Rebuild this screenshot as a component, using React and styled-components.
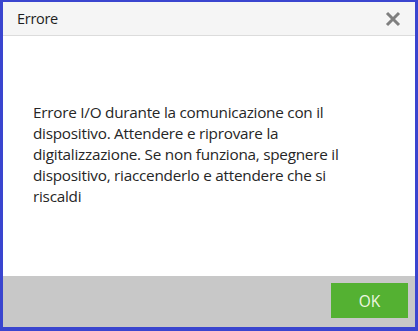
import React from "react";
import styled, { createGlobalStyle } from "styled-components";

const Global = createGlobalStyle`
  html, body { margin: 0; padding: 0; background: #ffffff; }
  body { font-family: "Open Sans", "Noto Sans", Arial, sans-serif; }
  #root { width: 418px; height: 331px; }
`;

const Frame = styled.div`
  box-sizing: border-box;
  width: 418px;
  height: 331px;
  border-style: solid;
  border-color: #3a45cf;
  border-width: 2px 3px 4px 3px;
  display: flex;
  flex-direction: column;
  background: #fff;
`;

const Header = styled.div`
  height: 33px;
  background: #f5f5f5;
  border-bottom: 1px solid #dcdcdc;
  display: flex;
  align-items: center;
  justify-content: space-between;
  padding: 0 14px 0 14px;
  flex-shrink: 0;
`;

const Title = styled.span`
  font-size: 14.5px;
  color: #1e1e1e;
  letter-spacing: -0.3px;
`;

const Close = styled.button`
  border: none;
  background: transparent;
  padding: 0;
  width: 16px;
  height: 16px;
  display: flex;
  cursor: pointer;
`;

const Body = styled.div`
  flex: 1;
  padding: 0 0 4px 30px;
  display: flex;
  align-items: center;
`;

const Message = styled.p`
  margin: 0;
  width: 322px;
  font-size: 15.3px;
  line-height: 21px;
  color: #262626;
  letter-spacing: -0.25px;
`;

const Footer = styled.div`
  height: 49px;
  background: #c8c8c8;
  display: flex;
  align-items: center;
  justify-content: flex-end;
  padding: 0 7px 2px 0;
  flex-shrink: 0;
`;

const OkButton = styled.button`
  width: 77px;
  height: 35px;
  border: none;
  background: #54b132;
  color: #eef7e0;
  font-family: "Open Sans", "Noto Sans", Arial, sans-serif;
  font-size: 15.5px;
  padding: 0;
  cursor: pointer;
`;

export default function App() {
  return (
    <>
      <Global />
      <Frame>
        <Header>
          <Title>Errore</Title>
          <Close aria-label="Chiudi">
            <svg width="16" height="16" viewBox="0 0 16 16">
              <path d="M2 2 L14 14 M14 2 L2 14" stroke="#7f7f7f" strokeWidth="3" strokeLinecap="butt" />
            </svg>
          </Close>
        </Header>
        <Body>
          <Message>
            Errore I/O durante la comunicazione con il dispositivo. Attendere e riprovare la
            digitalizzazione. Se non funziona, spegnere il dispositivo, riaccenderlo e attendere
            che si riscaldi
          </Message>
        </Body>
        <Footer>
          <OkButton>OK</OkButton>
        </Footer>
      </Frame>
    </>
  );
}
